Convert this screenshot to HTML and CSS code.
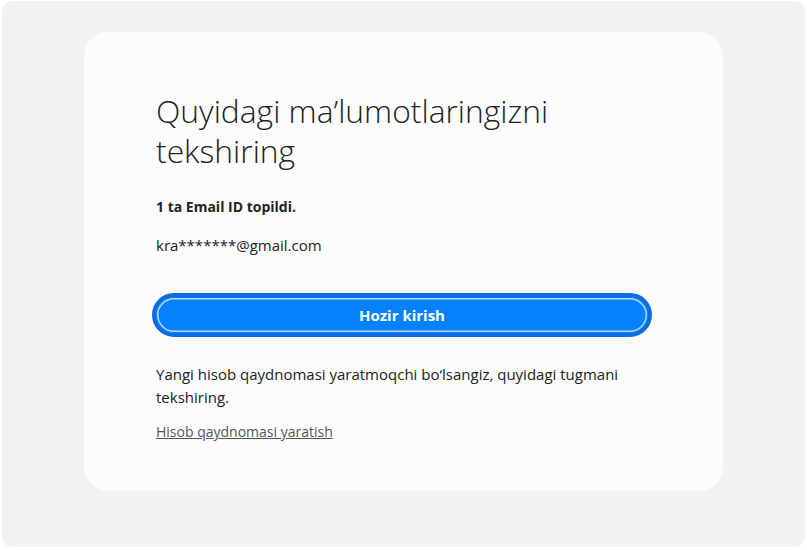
FILE: index.html
```html
<!DOCTYPE html>
<html lang="uz">
<head>
<meta charset="utf-8">
<title>Tekshiring</title>
<link rel="stylesheet" href="styles.css">
</head>
<body>
<div class="frame">
  <main class="card">
    <h1 class="title">Quyidagi ma’lumotlaringizni tekshiring</h1>
    <p class="found">1 ta Email ID topildi.</p>
    <p class="email">kra*******@gmail.com</p>
    <button class="btn" type="button">Hozir kirish</button>
    <p class="note">Yangi hisob qaydnomasi yaratmoqchi bo‘lsangiz, quyidagi tugmani tekshiring.</p>
    <a class="link" href="#">Hisob qaydnomasi yaratish</a>
  </main>
</div>
</body>
</html>
```
FILE: styles.css
```css
html, body {
  margin: 0;
  padding: 0;
  background: #ffffff;
}
body {
  font-family: "Open Sans", "Noto Sans", sans-serif;
  color: #222222;
}
.frame {
  margin: 1px 2px 3px 2px;
  height: 546px;
  box-sizing: border-box;
  background: #f2f2f2;
  border-radius: 10px;
  padding: 31px 82px 0 82px;
}
.card {
  width: 639px;
  height: 459px;
  box-sizing: border-box;
  background: #fcfcfc;
  border-radius: 24px;
  padding: 59px 72px 0 72px;
  display: flex;
  flex-direction: column;
  align-items: flex-start;
}
.title {
  margin: 0;
  font-weight: 300;
  font-size: 31.8px;
  line-height: 40px;
  color: #222222;
  width: 495px;
}
.found {
  margin: 26px 0 0 0;
  font-size: 14px;
  font-weight: 700;
  line-height: 20px;
}
.email {
  margin: 18px 0 0 0;
  font-size: 15px;
  line-height: 20px;
}
.btn {
  margin: 38px 0 0 -4px;
  width: 500px;
  height: 44px;
  box-sizing: border-box;
  border: 4px solid #0a6be3;
  border-radius: 22px;
  background: #0381fe;
  box-shadow: inset 0 0 0 1px #0a7af5, inset 0 0 0 2.5px #b6d8ff;
  color: #ffffff;
  font-family: "Open Sans", "Noto Sans", sans-serif;
  font-size: 15px;
  font-weight: 700;
  cursor: pointer;
  padding: 0;
}
.note {
  margin: 26px 0 0 0;
  font-size: 15px;
  line-height: 23px;
  width: 495px;
}
.link {
  margin-top: 13px;
  font-size: 14px;
  line-height: 20px;
  color: #555555;
  text-decoration: underline;
}
```
